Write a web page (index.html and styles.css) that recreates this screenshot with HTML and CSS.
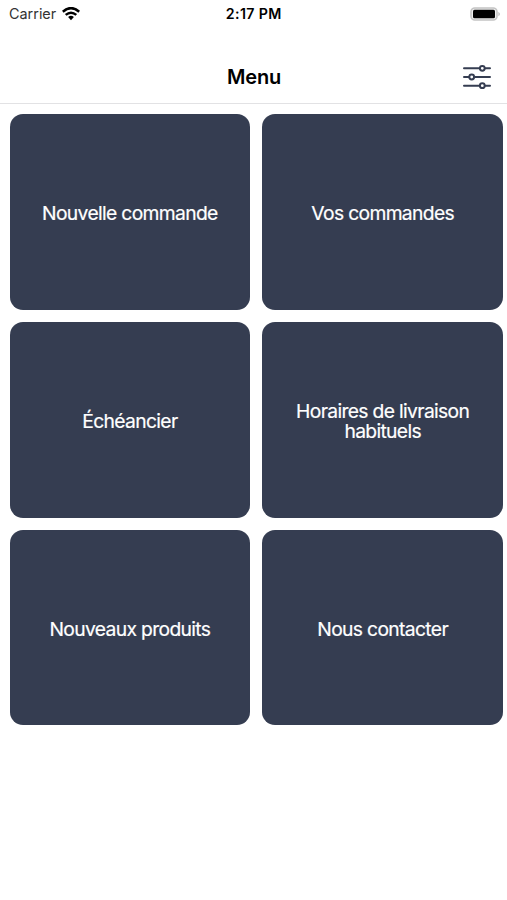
FILE: index.html
```html
<!DOCTYPE html>
<html lang="fr">
<head>
<meta charset="utf-8">
<title>Menu</title>
<link rel="stylesheet" href="styles.css">
</head>
<body>
<div class="status">
  <div class="carrier"><span class="carrier-name">Carrier</span>
    <svg class="wifi" width="18" height="14" viewBox="0 0 18 14" fill="none" stroke="#000" stroke-width="2.5"><path d="M.8 4.7Q9-2.5 17.2 4.7"/><path d="M3.7 7.9Q9 3.5 14.3 7.9"/><path d="M6.1 10Q9 7.7 11.9 10L9 13.2Z" fill="#000" stroke="none"/></svg>
  </div>
  <div class="time">2:17 PM</div>
  <svg class="battery" width="31" height="14" viewBox="0 0 31 14"><rect x="1" y="1" width="26" height="12" rx="3.8" fill="#eee" stroke="#c4c4c4" stroke-width="1.6"/><rect x="3" y="2.7" width="22" height="8.6" rx="1.5"/><path d="M28.5 4.7Q31 7 28.5 9.3Z" fill="#aaa"/></svg>
</div>
<header class="header">
  <h1 class="title">Menu</h1>
  <svg class="filters" width="28" height="26" viewBox="0 0 28 26" fill="#fff" stroke="#353d51" stroke-width="2" stroke-linecap="round"><path d="M1 4.3H27M1 13H27M1 21.7H27"/><circle cx="19.3" cy="4.3" r="2.4"/><circle cx="8.7" cy="13" r="2.4"/><circle cx="19.3" cy="21.7" r="2.4"/></svg>
</header>
<main class="grid">
  <div class="tile"><span class="label">Nouvelle commande</span></div>
  <div class="tile"><span class="label">Vos commandes</span></div>
  <div class="tile"><span class="label">Échéancier</span></div>
  <div class="tile"><span class="label">Horaires de livraison habituels</span></div>
  <div class="tile"><span class="label">Nouveaux produits</span></div>
  <div class="tile"><span class="label">Nous contacter</span></div>
</main>
</body>
</html>
```
FILE: styles.css
```css
* { box-sizing: border-box; }
body {
  margin: 0;
  height: 900px;
  background: #fff;
  font-family: Inter, "Liberation Sans", sans-serif;
  color: #000;
  overflow: hidden;
}
.status {
  display: grid;
  grid-template-columns: 1fr auto 1fr;
  align-items: center;
  height: 27px;
  padding: 0 6px 0 9px;
}
.carrier { display: flex; align-items: center; gap: 6px; }
.carrier-name { font-size: 14.4px; color: #333; }
.time {
  font-size: 14.2px;
  font-weight: 600;
  letter-spacing: .35px;
  margin-right: 2.5px;
}
.battery { justify-self: end; }
.header {
  display: grid;
  grid-template-columns: 1fr auto 1fr;
  align-items: center;
  height: 77px;
  padding: 23px 16.5px 0 17.5px;
  border-bottom: 1px solid #e2e2e4;
}
.title {
  grid-column: 2;
  margin: 0;
  font-size: 20px;
  line-height: 24px;
  font-weight: 600;
  letter-spacing: -.2px;
}
.filters { justify-self: end; }
.grid {
  display: grid;
  grid-template-columns: 240.6px 240.6px;
  grid-auto-rows: 195.5px;
  gap: 12.2px;
  padding: 10.4px 0 0 9.6px;
}
.tile {
  display: flex;
  align-items: center;
  justify-content: center;
  padding: 2.4px 20px 0;
  border-radius: 13px;
  background: #353d51;
  color: #fff;
  font-size: 19.3px;
  line-height: 20px;
  letter-spacing: -.66px;
  text-align: center;
}
.label { -webkit-text-stroke: .2px #fff; }
```
